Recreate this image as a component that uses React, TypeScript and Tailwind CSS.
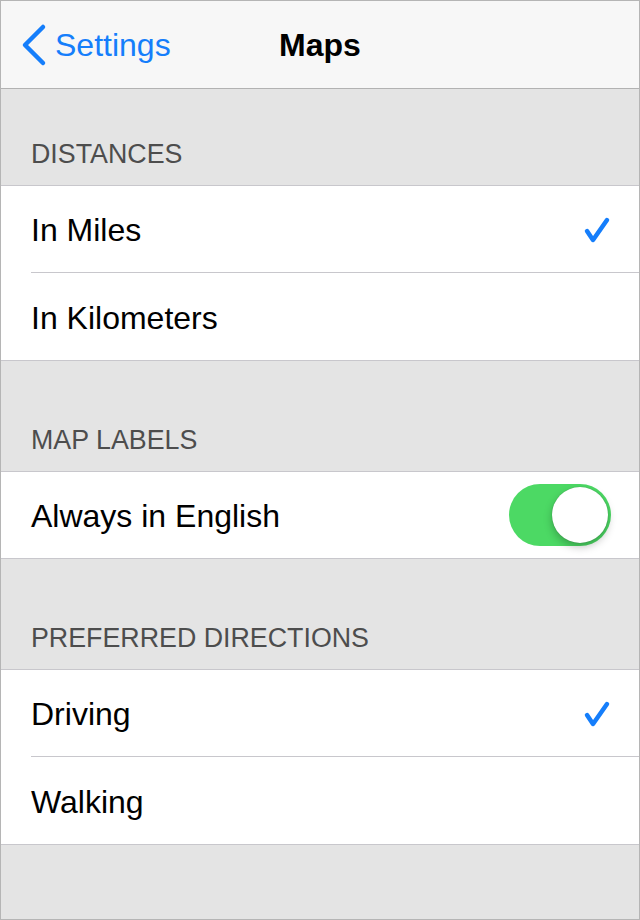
import { useState } from 'react';

type Option = { label: string };

function Check() {
  return (
    <svg width="28" height="30" viewBox="0 0 28 30" className="shrink-0">
      <polyline
        points="4,16 10,25 24,5"
        fill="none"
        stroke="#157efb"
        strokeWidth="4.5"
        strokeLinecap="round"
        strokeLinejoin="round"
      />
    </svg>
  );
}

function SectionHeader({ title, first }: { title: string; first?: boolean }) {
  return (
    <div
      className={`flex items-end px-[30px] pb-[17px] text-[26.8px] leading-none text-[#4d4d4d] ${
        first ? 'h-[96px]' : 'h-[110px]'
      }`}
    >
      {title}
    </div>
  );
}

function ChoiceGroup({
  options,
  selected,
  onSelect,
}: {
  options: Option[];
  selected: number;
  onSelect: (i: number) => void;
}) {
  return (
    <div className="border-y border-[#c8c7cc] bg-white">
      {options.map((o, i) => (
        <div
          key={o.label}
          onClick={() => onSelect(i)}
          className="flex h-[87px] cursor-pointer pl-[30px]"
        >
          <div
            className={`flex flex-1 items-center justify-between pr-[28px] pt-[2px] ${
              i < options.length - 1 ? 'border-b border-[#c8c7cc]' : ''
            }`}
          >
            <span className="text-[32px] text-black">{o.label}</span>
            {selected === i && <Check />}
          </div>
        </div>
      ))}
    </div>
  );
}

export default function App() {
  const [units, setUnits] = useState(0);
  const [english, setEnglish] = useState(true);
  const [directions, setDirections] = useState(0);

  return (
    <div
      className="flex h-[920px] w-[640px] flex-col border border-[#b5b5b5] bg-[#e4e4e4]"
      style={{ fontFamily: '"Liberation Sans", Arial, sans-serif' }}
    >
      {/* nav bar */}
      <div className="relative flex h-[88px] shrink-0 items-center border-b border-[#b2b2b2] bg-[#f7f7f7]">
        <div className="flex items-center pl-[18px] text-[#157efb]">
          <svg width="30" height="44" viewBox="0 0 30 44">
            <polyline
              points="24,4 6,22 24,40"
              fill="none"
              stroke="#157efb"
              strokeWidth="4.5"
              strokeLinecap="round"
              strokeLinejoin="round"
            />
          </svg>
          <span className="ml-[6px] text-[32px]">Settings</span>
        </div>
        <div className="pointer-events-none absolute inset-x-0 text-center text-[32px] font-bold text-black">
          Maps
        </div>
      </div>

      <SectionHeader title="DISTANCES" first />
      <ChoiceGroup
        options={[{ label: 'In Miles' }, { label: 'In Kilometers' }]}
        selected={units}
        onSelect={setUnits}
      />

      <SectionHeader title="MAP LABELS" />
      <div className="border-y border-[#c8c7cc] bg-white">
        <div className="flex h-[86px] items-center justify-between pl-[30px] pr-[28px]">
          <span className="pt-[2px] text-[32px] text-black">Always in English</span>
          <button
            onClick={() => setEnglish(v => !v)}
            className={`relative h-[62px] w-[102px] rounded-full ${
              english ? 'bg-[#4cd964]' : 'bg-white shadow-[inset_0_0_0_3px_#e5e5e5]'
            }`}
          >
            <span
              className={`absolute top-[3px] h-[56px] w-[56px] rounded-full bg-white shadow-[0_4px_8px_rgba(0,0,0,0.25),0_0_1px_rgba(0,0,0,0.3)] ${
                english ? 'left-[43px]' : 'left-[3px]'
              }`}
            />
          </button>
        </div>
      </div>

      <SectionHeader title="PREFERRED DIRECTIONS" />
      <ChoiceGroup
        options={[{ label: 'Driving' }, { label: 'Walking' }]}
        selected={directions}
        onSelect={setDirections}
      />
    </div>
  );
}
